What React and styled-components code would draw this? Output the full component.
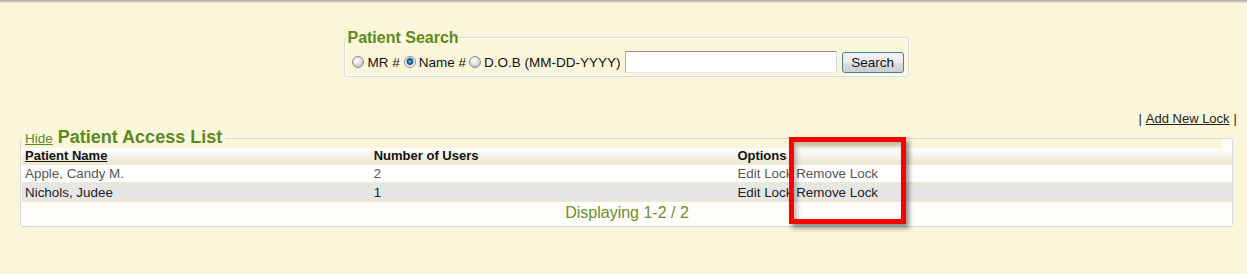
import React from 'react';
import styled, { createGlobalStyle } from 'styled-components';

const GlobalStyle = createGlobalStyle`
  body {
    margin: 0;
    background: #fbf5d9;
    font-family: "Liberation Sans", Arial, sans-serif;
    font-size: 13px;
    color: #222;
  }
`;

const Screen = styled.div`
  position: relative;
  height: 274px;
  overflow: hidden;
`;

const TopShade = styled.div`
  height: 3px;
  background: linear-gradient(#a9a698, #d6d2c0 60%, #f4eed3);
`;

const Page = styled.div`
  padding: 0 14px 0 20px;
`;

const SearchRow = styled.div`
  display: flex;
  justify-content: center;
  padding-top: 25px;
`;

const SearchBox = styled.fieldset`
  margin: 0;
  padding: 4px 4px 3px 2px;
  border: 1px solid #d5dbe1;
  border-radius: 3px;
  box-shadow: inset 0 0 0 1px #fdfcf6;
`;

const Title = styled.legend`
  padding: 0;
  color: #5b8a1d;
  font-weight: bold;
  font-size: ${p => p.size || 16}px;
  line-height: ${p => (p.size || 16) + 3}px;
`;

const SearchForm = styled.div`
  display: flex;
  align-items: center;
  height: 22px;
  font-size: 13.5px;
`;

const Radio = styled.span`
  display: inline-block;
  box-sizing: border-box;
  flex: none;
  width: 12px;
  height: 12px;
  margin: 0 3px 0 ${p => p.gap ?? 4}px;
  border-radius: 50%;
  border: 1px solid #8d8f91;
  background: ${p =>
    p.checked
      ? 'radial-gradient(circle at 50% 45%, #7cc8f2 0, #1b73ac 1.8px, #0d4a7a 3px, #d4d4d4 3.6px, #f7f7f7 5px)'
      : 'radial-gradient(circle at 40% 35%, #ffffff 0, #e9e9e9 3px, #c9c9c9 6px)'};
`;

const Label = styled.span`
  color: #111;
  white-space: pre;
`;

const TextInput = styled.input`
  box-sizing: border-box;
  width: 212px;
  height: 22px;
  margin: 0 0 0 4px;
  border: 1px solid #abadb3;
  border-top-color: #8e9297;
  border-right-color: #dbdfe6;
  border-bottom-color: #e3e9ef;
  background: #fff;
`;

const Button = styled.button`
  box-sizing: border-box;
  width: 62px;
  height: 21px;
  margin-left: 5px;
  padding: 0;
  border: 1px solid #3c7fb1;
  border-radius: 3px;
  background: linear-gradient(#f2f2f2 0, #ebebeb 50%, #dddddd 51%, #cfcfcf 100%);
  font-family: inherit;
  font-size: 13.5px;
  color: #111;
`;

const ActionRow = styled.div`
  display: flex;
  justify-content: flex-end;
  margin: 34px -4px 0 0;
  line-height: 15px;
  color: #222;
`;

const Link = styled.a`
  color: #222;
  text-decoration: underline;
  margin: 0 4px;
`;

const ListBox = styled.fieldset`
  margin: 1px 0 0 0;
  padding: 0 0 2px 1px;
  border: 1px solid #d4d9de;
  border-radius: 3px;
  background: linear-gradient(#fbf5d9, #fbf5d9) no-repeat 0 0 / calc(100% - 10px) 11px, #fffdf9;
`;

const ListLegend = styled.legend`
  padding: 0 3px 0 3px;
  display: flex;
  align-items: baseline;
  gap: 5px;
  line-height: 20px;
`;

const HideLink = styled.a`
  color: #5b8a1d;
  font-size: 13.5px;
  text-decoration: underline;
`;

const Table = styled.table`
  width: 100%;
  border-collapse: collapse;
  margin-top: -1px;
`;

const Col = styled.col`
  width: ${p => p.w}px;
`;

const HeadCell = styled.th`
  text-align: left;
  padding: 0 3px;
  height: 16px;
  line-height: 16px;
  font-weight: bold;
  color: #111;
  text-decoration: ${p => (p.underline ? 'underline' : 'none')};
  background: linear-gradient(#ffffff, #ebe7d2);
`;

const Row = styled.tr`
  background: ${p => (p.alt ? '#e6e6e6' : '#ffffff')};
  color: ${p => (p.alt ? '#1c1c1c' : '#555555')};
  border-top: 1px solid #efebc4;
`;

const Cell = styled.td`
  padding: 0 3px;
  height: ${p => (p.alt ? 18 : 17)}px;
  line-height: 17px;
  font-size: 13.4px;
  white-space: nowrap;
`;

const Footer = styled.td`
  text-align: center;
  height: 20px;
  font-size: 16px;
  color: #6a8f2c;
  background: #fffdf9;
  border-top: 1px solid #efebc4;
`;

const Highlight = styled.div`
  position: absolute;
  left: 789px;
  top: 137px;
  width: 117px;
  height: 87px;
  box-sizing: border-box;
  border: 5px solid #ff0000;
  box-shadow: 3px 4px 5px rgba(0, 0, 0, 0.45), inset 3px 4px 5px rgba(0, 0, 0, 0.25);
  pointer-events: none;
`;

const patients = [
  { name: 'Apple, Candy M.', users: 2 },
  { name: 'Nichols, Judee', users: 1 },
];

export default function App() {
  return (
    <Screen>
      <GlobalStyle />
      <TopShade />
      <Page>
        <SearchRow>
          <SearchBox>
            <Title>Patient Search</Title>
            <SearchForm>
              <Radio gap={5} />
              <Label>MR #</Label>
              <Radio checked />
              <Label>Name #</Label>
              <Radio gap={3} />
              <Label>D.O.B (MM-DD-YYYY)</Label>
              <TextInput type="text" />
              <Button>Search</Button>
            </SearchForm>
          </SearchBox>
        </SearchRow>

        <ActionRow>
          | <Link href="#">Add New Lock</Link> |
        </ActionRow>

        <ListBox>
          <ListLegend>
            <HideLink href="#">Hide</HideLink>
            <Title as="span" size={18}>Patient Access List</Title>
          </ListLegend>
          <Table>
            <colgroup>
              <Col w={349} />
              <Col w={364} />
              <Col w={498} />
            </colgroup>
            <thead>
              <tr>
                <HeadCell underline>Patient Name</HeadCell>
                <HeadCell>Number of Users</HeadCell>
                <HeadCell>Options</HeadCell>
              </tr>
            </thead>
            <tbody>
              {patients.map((p, i) => {
                const alt = i % 2 === 1;
                return (
                  <Row key={p.name} alt={alt}>
                    <Cell alt={alt}>{p.name}</Cell>
                    <Cell alt={alt}>{p.users}</Cell>
                    <Cell alt={alt}>Edit Lock Remove Lock</Cell>
                  </Row>
                );
              })}
              <tr>
                <Footer colSpan={3}>Displaying 1-2 / 2</Footer>
              </tr>
            </tbody>
          </Table>
        </ListBox>
      </Page>
      <Highlight />
    </Screen>
  );
}
